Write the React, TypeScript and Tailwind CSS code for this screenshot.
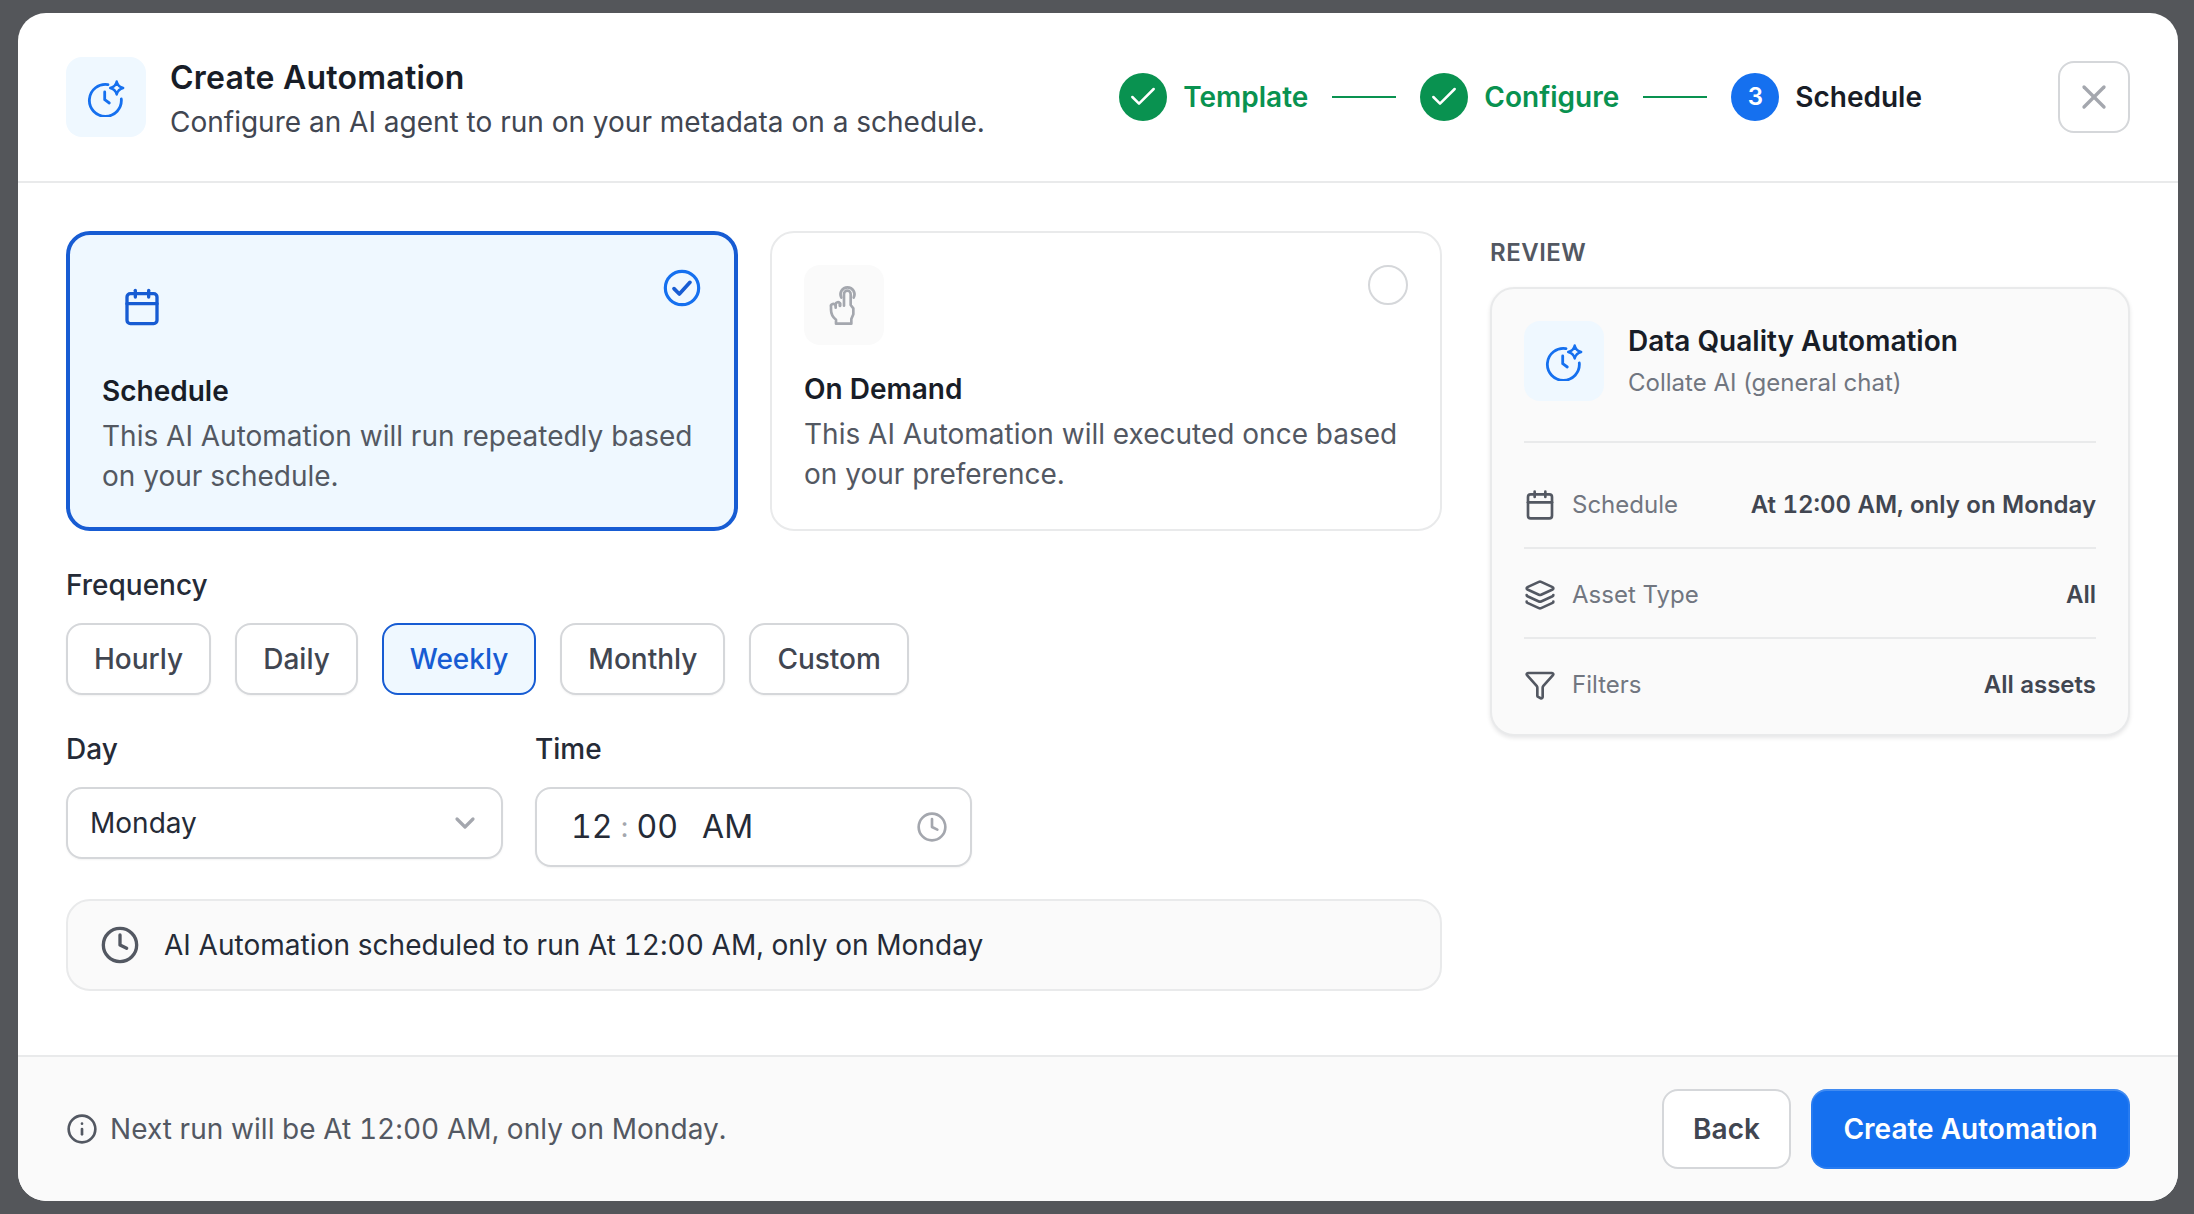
import { Calendar, Check, ChevronDown, Clock, Funnel, Info, Layers, X } from 'lucide-react'

function ClockSparkle() {
  return (
    <svg width="40" height="40" viewBox="0 0 40 40" fill="none" stroke="#1570EF" strokeLinecap="round" strokeLinejoin="round">
      <path d="M22 7.6A16 16 0 1 0 35.3 22" strokeWidth="2.8" />
      <path d="M18.7 15v7.7l4.6 3.3" strokeWidth="2.8" />
      <path d="M30.7 4.5c.8 3.6 2.8 5.7 6.5 6.5-3.7.8-5.7 2.9-6.5 6.5-.8-3.6-2.8-5.7-6.5-6.5 3.7-.8 5.7-2.9 6.5-6.5Z" strokeWidth="2.4" />
    </svg>
  )
}

function HandTap() {
  return (
    <svg width="40" height="40" viewBox="30 30 120 120" fill="none" stroke="#A4A7AE" strokeWidth="8" strokeLinecap="round" strokeLinejoin="round">
      <path d="M82 68A21 21 0 1 1 119 68" />
      <path d="M90 92V57a10 10 0 0 1 20 0v33l8 10v18l-6 14v14H66v-12c-10-8-15-18-15-30V96a7 7 0 0 1 14-4v-4a7 7 0 0 1 13-3v7" />
      <path d="M65 92v6M78 85v8" />
    </svg>
  )
}

function CheckBadge() {
  return (
    <svg width="40" height="40" viewBox="0 0 24 24" fill="none" strokeLinecap="round" strokeLinejoin="round" className="absolute top-[33px] right-8">
      <circle cx="12" cy="12" r="10" stroke="#1570EF" strokeWidth="1.9" />
      <path d="M7.2 12.4l3.2 3.2 6.4-7" stroke="#175CD3" strokeWidth="2.2" />
    </svg>
  )
}

function StepDone({ label }: { label: string }) {
  return (
    <>
      <div className="w-12 h-12 rounded-full bg-[#099250] flex items-center justify-center">
        <Check className="text-white" size={32} strokeWidth={1.9} />
      </div>
      <span className="ml-4 text-[28px] leading-10 font-semibold text-[#099250]">{label}</span>
      <div className="w-16 h-0.5 bg-[#099250] mx-6" />
    </>
  )
}

const frequencies = ['Hourly', 'Daily', 'Weekly', 'Monthly', 'Custom']

const reviewRows = [
  { icon: <Calendar size={32} strokeWidth={2} />, label: 'Schedule', value: 'At 12:00 AM, only on Monday', cls: 'h-[106px] pt-5 flex items-center border-b-2 border-[#E9EAEB]' },
  { icon: <Layers size={32} strokeWidth={2} />, label: 'Asset Type', value: 'All', cls: 'h-[90px] pt-1 flex items-center border-b-2 border-[#E9EAEB]' },
  { icon: <Funnel size={32} strokeWidth={2} />, label: 'Filters', value: 'All assets', cls: 'h-[90px] pt-0.5 flex items-center' },
]

export default function App() {
  return (
    <div className="w-[2194px] h-[1214px] bg-[#54565a] pl-[18px] pt-[13px] overflow-hidden font-['Inter',sans-serif]">
      <div className="w-[2160px] h-[1188px] bg-white rounded-[28px] overflow-hidden flex flex-col">
        {/* header */}
        <div className="h-[170px] shrink-0 border-b-2 border-[#E9EAEB] flex items-center px-12">
          <div className="w-20 h-20 rounded-2xl bg-[#EFF8FF] flex items-center justify-center">
            <ClockSparkle />
          </div>
          <div className="ml-6 flex-1 pt-[5px]">
            <div className="text-[32px] leading-10 font-semibold tracking-[0.25px] text-[#181D27]">Create Automation</div>
            <div className="mt-1 text-[28px] leading-10 text-[#414651]">Configure an AI agent to run on your metadata on a schedule.</div>
          </div>
          <div className="flex items-center mr-[136px]">
            <StepDone label="Template" />
            <StepDone label="Configure" />
            <div className="w-12 h-12 rounded-full bg-[#1570EF] flex items-center justify-center text-white text-2xl font-semibold">3</div>
            <span className="ml-4 text-[28px] leading-10 font-semibold text-[#181D27]">Schedule</span>
          </div>
          <button className="w-[72px] h-[72px] rounded-2xl border-2 border-[#D5D7DA] flex items-center justify-center">
            <X className="text-[#A4A7AE]" size={40} strokeWidth={2} />
          </button>
        </div>

        {/* body */}
        <div className="flex-1 flex px-12 pt-12 gap-12">
          <div className="w-[1376px] shrink-0">
            <div className="flex gap-8">
              <div className="relative w-[672px] h-[300px] rounded-3xl border-4 border-[#175CD3] bg-[#EFF8FF] p-8">
                <CheckBadge />
                <div className="w-20 h-20 flex items-center justify-center">
                  <Calendar className="text-[#175CD3]" size={40} strokeWidth={2} />
                </div>
                <div className="mt-6 text-[28px] leading-10 font-semibold text-[#181D27]">Schedule</div>
                <div className="mt-[5px] text-[28px] leading-10 text-[#535862]">
                  This AI Automation will run repeatedly based on your schedule.
                </div>
              </div>
              <div className="relative w-[672px] h-[300px] rounded-3xl border-2 border-[#E9EAEB] bg-white p-8">
                <div className="absolute top-8 right-8 w-10 h-10 rounded-full border-2 border-[#D5D7DA]" />
                <div className="w-20 h-20 rounded-2xl bg-[#FAFAFA] flex items-center justify-center">
                  <HandTap />
                </div>
                <div className="mt-6 text-[28px] leading-10 font-semibold text-[#181D27]">On Demand</div>
                <div className="mt-[5px] text-[28px] leading-10 text-[#535862]">
                  This AI Automation will executed once based on your preference.
                </div>
              </div>
            </div>

            <div className="mt-[34px] text-[28px] leading-10 font-medium text-[#252B37]">Frequency</div>
            <div className="mt-[18px] flex gap-6">
              {frequencies.map((f) =>
                f === 'Weekly' ? (
                  <div key={f} className="h-[72px] px-[26px] rounded-2xl border-2 border-[#175CD3] bg-[#EFF8FF] flex items-center text-[28px] font-medium text-[#175CD3]">
                    {f}
                  </div>
                ) : (
                  <div key={f} className="h-[72px] px-[26px] rounded-2xl border-2 border-[#D5D7DA] bg-white shadow-[0_1px_2px_rgba(10,13,18,0.05)] flex items-center text-[28px] font-medium text-[#414651]">
                    {f}
                  </div>
                ),
              )}
            </div>

            <div className="mt-[34px] flex gap-8 items-start">
              <div className="w-[437px]">
                <div className="text-[28px] leading-10 font-medium text-[#252B37]">Day</div>
                <div className="mt-[18px] h-[72px] rounded-2xl border-2 border-[#D5D7DA] bg-white shadow-[0_1px_2px_rgba(10,13,18,0.05)] flex items-center justify-between pl-[22px] pr-5">
                  <span className="text-[28px] text-[#252B37]">Monday</span>
                  <ChevronDown className="text-[#A4A7AE]" size={32} strokeWidth={2.4} />
                </div>
              </div>
              <div className="w-[437px]">
                <div className="text-[28px] leading-10 font-medium text-[#252B37]">Time</div>
                <div className="mt-[18px] h-20 rounded-2xl border-2 border-[#D5D7DA] bg-white shadow-[0_1px_2px_rgba(10,13,18,0.05)] flex items-center pl-[34px] pr-[22px]">
                  <span className="text-[32px] tabular-nums text-[#252B37]">12</span>
                  <span className="ml-2 text-[28px] text-[#A4A7AE]">:</span>
                  <span className="ml-2 text-[32px] tabular-nums text-[#252B37]">00</span>
                  <span className="ml-[24px] text-[32px] text-[#252B37]">AM</span>
                  <Clock className="ml-auto text-[#A4A7AE]" size={32} strokeWidth={2} />
                </div>
              </div>
            </div>

            <div className="mt-8 h-[92px] rounded-3xl border-2 border-[#E9EAEB] bg-[#FAFAFA] flex items-center pl-[32px]">
              <Clock className="text-[#535862]" size={40} strokeWidth={2} />
              <span className="ml-[24px] text-[28px] tabular-nums tracking-[0.05px] text-[#252B37]">AI Automation scheduled to run At 12:00 AM, only on Monday</span>
            </div>
          </div>

          <div className="flex-1">
            <div className="h-10 mt-0.5 text-2xl leading-10 font-semibold tracking-[0.5px] text-[#535862]">REVIEW</div>
            <div className="mt-3.5 h-[449px] rounded-3xl border-2 border-[#E9EAEB] bg-[#FAFAFA] shadow-[0_2px_4px_rgba(10,13,18,0.1)] px-8 pt-8">
              <div className="flex pb-10 border-b-2 border-[#E9EAEB]">
                <div className="w-20 h-20 rounded-2xl bg-[#EFF8FF] flex items-center justify-center">
                  <ClockSparkle />
                </div>
                <div className="ml-6">
                  <div className="text-[28px] leading-10 font-semibold text-[#181D27]">Data Quality Automation</div>
                  <div className="mt-1 text-2xl leading-9 text-[#717680]">Collate AI (general chat)</div>
                </div>
              </div>
              {reviewRows.map((r) => (
                <div key={r.label} className={r.cls}>
                  <span className="text-[#535862]">{r.icon}</span>
                  <span className="ml-4 text-2xl text-[#717680]">{r.label}</span>
                  <span className="ml-auto text-2xl font-semibold tabular-nums text-[#414651]">{r.value}</span>
                </div>
              ))}
            </div>
          </div>
        </div>

        {/* footer */}
        <div className="h-[146px] shrink-0 border-t-2 border-[#E9EAEB] bg-[#FAFAFA] flex items-center px-12">
          <Info className="text-[#535862]" size={32} strokeWidth={2} />
          <span className="ml-3 text-[28px] tabular-nums tracking-[0.06px] text-[#535862]">Next run will be At 12:00 AM, only on Monday.</span>
          <button className="ml-auto w-[129px] h-20 rounded-2xl border-2 border-[#D5D7DA] bg-white text-[28px] font-semibold text-[#414651]">Back</button>
          <button className="ml-5 w-[319px] h-20 rounded-2xl bg-[#1570EF] shadow-[inset_0_2px_0_rgba(255,255,255,0.12),inset_0_0_0_2px_rgba(255,255,255,0.08)] text-[28px] font-semibold text-white">Create Automation</button>
        </div>
      </div>
    </div>
  )
}
